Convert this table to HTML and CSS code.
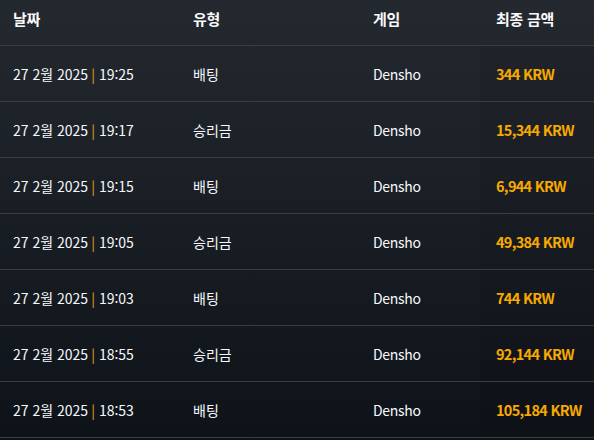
FILE: index.html
```html
<!DOCTYPE html>
<html lang="ko">
<head>
    <meta charset="UTF-8">
    <meta name="viewport" content="width=device-width, initial-scale=1.0">
    <title>거래 내역</title>
    <link rel="stylesheet" href="styles.css">
</head>
<body>

    <div class="history">
        <div class="row head">
            <div class="cell">날짜</div>
            <div class="cell">유형</div>
            <div class="cell">게임</div>
            <div class="cell amount-col">최종 금액</div>
        </div>

        <div class="row">
            <div class="cell">27 2월 2025 <span class="sep">|</span> 19:25</div>
            <div class="cell">배팅</div>
            <div class="cell game">Densho</div>
            <div class="cell amount-col amount">344 KRW</div>
        </div>
        <div class="row">
            <div class="cell">27 2월 2025 <span class="sep">|</span> 19:17</div>
            <div class="cell">승리금</div>
            <div class="cell game">Densho</div>
            <div class="cell amount-col amount">15,344 KRW</div>
        </div>
        <div class="row">
            <div class="cell">27 2월 2025 <span class="sep">|</span> 19:15</div>
            <div class="cell">배팅</div>
            <div class="cell game">Densho</div>
            <div class="cell amount-col amount">6,944 KRW</div>
        </div>
        <div class="row">
            <div class="cell">27 2월 2025 <span class="sep">|</span> 19:05</div>
            <div class="cell">승리금</div>
            <div class="cell game">Densho</div>
            <div class="cell amount-col amount">49,384 KRW</div>
        </div>
        <div class="row">
            <div class="cell">27 2월 2025 <span class="sep">|</span> 19:03</div>
            <div class="cell">배팅</div>
            <div class="cell game">Densho</div>
            <div class="cell amount-col amount">744 KRW</div>
        </div>
        <div class="row">
            <div class="cell">27 2월 2025 <span class="sep">|</span> 18:55</div>
            <div class="cell">승리금</div>
            <div class="cell game">Densho</div>
            <div class="cell amount-col amount">92,144 KRW</div>
        </div>
        <div class="row">
            <div class="cell">27 2월 2025 <span class="sep">|</span> 18:53</div>
            <div class="cell">배팅</div>
            <div class="cell game">Densho</div>
            <div class="cell amount-col amount">105,184 KRW</div>
        </div>
    </div>

</body>
</html>
```

FILE: styles.css
```css
body {
    margin: 0;
    font-family: 'Noto Sans CJK KR', 'Noto Sans', sans-serif;
    font-size: 14px;
    line-height: 20px;
    color: #f8f9fb;
    background: linear-gradient(#24282f, #0e1319);
    min-height: 440px;
}
.history {
    width: 594px;
}
.row {
    display: grid;
    grid-template-columns: 180px 180px 120px 1fr;
    border-bottom: 1px solid #3a3d42;
}
.cell {
    height: 55px;
    padding: 0 13px;
    display: flex;
    align-items: center;
    white-space: nowrap;
}
.head .cell {
    height: auto;
    padding: 9px 13px 16px;
    font-size: 15px;
    font-weight: bold;
    letter-spacing: -0.3px;
    align-items: flex-start;
}
.row .amount-col {
    padding-left: 16px;
    padding-right: 0;
}
.row:not(.head) .amount-col {
    background: rgba(0, 0, 0, 0.05);
}
.game {
    letter-spacing: -0.3px;
}
.amount {
    color: #f8a900;
    font-size: 14.5px;
    font-weight: bold;
    letter-spacing: -0.7px;
}
.sep {
    color: #e0a31a;
    margin: 0 4px 0 3px;
}
```
